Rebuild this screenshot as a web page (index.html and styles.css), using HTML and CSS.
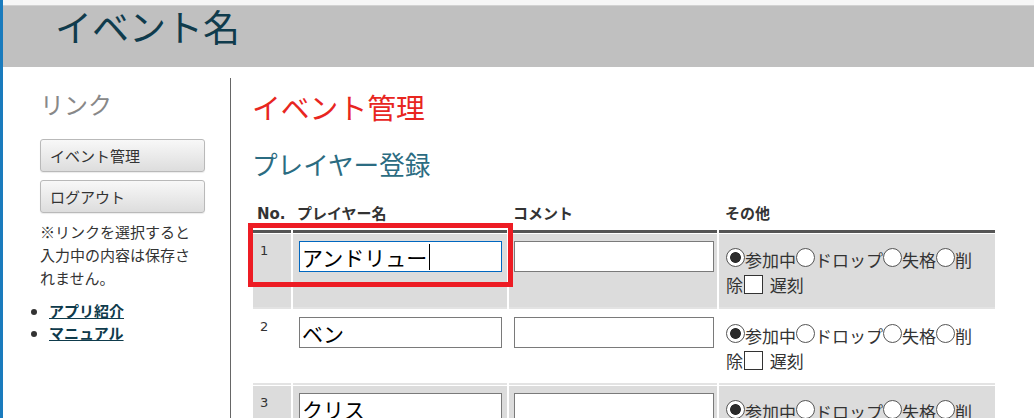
FILE: index.html
```html
<!DOCTYPE html>
<html lang="ja">
<head>
<meta charset="utf-8">
<title>イベント管理</title>
<link rel="stylesheet" href="styles.css">
</head>
<body>
<div class="frame">
  <div class="topstrip"></div>
  <header class="site-header"><h1 class="site-title">イベント名</h1></header>
  <div class="layout">
    <aside class="sidebar">
      <h2 class="side-title">リンク</h2>
      <a class="side-btn" href="#">イベント管理</a>
      <a class="side-btn" href="#">ログアウト</a>
      <p class="side-note">※リンクを選択すると入力中の内容は保存されません。</p>
      <ul class="side-links">
        <li><a href="#">アプリ紹介</a></li>
        <li><a href="#">マニュアル</a></li>
      </ul>
    </aside>
    <main class="content">
      <h1 class="page-title">イベント管理</h1>
      <h2 class="section-title">プレイヤー登録</h2>
      <table class="players">
        <thead>
          <tr><th class="c-no">No.</th><th class="c-name">プレイヤー名</th><th class="c-comment">コメント</th><th class="c-other">その他</th></tr>
        </thead>
        <tbody>
          <tr class="odd">
            <td class="num">1</td>
            <td class="name"><span class="field"><input class="txt txt-name is-focus" type="text" value="アンドリュー"><span class="caret"></span></span></td>
            <td class="comment"><input class="txt txt-comment" type="text" value=""></td>
            <td class="other"><label class="opt"><input class="rd" type="radio" name="s1" checked>参加中</label><label class="opt"><input class="rd" type="radio" name="s1">ドロップ</label><label class="opt"><input class="rd" type="radio" name="s1">失格</label><label class="opt"><input class="rd" type="radio" name="s1">削除</label><label class="opt"><input class="cb" type="checkbox"> 遅刻</label></td>
          </tr>
          <tr>
            <td class="num">2</td>
            <td class="name"><span class="field"><input class="txt txt-name" type="text" value="ベン"></span></td>
            <td class="comment"><input class="txt txt-comment" type="text" value=""></td>
            <td class="other"><label class="opt"><input class="rd" type="radio" name="s2" checked>参加中</label><label class="opt"><input class="rd" type="radio" name="s2">ドロップ</label><label class="opt"><input class="rd" type="radio" name="s2">失格</label><label class="opt"><input class="rd" type="radio" name="s2">削除</label><label class="opt"><input class="cb" type="checkbox"> 遅刻</label></td>
          </tr>
          <tr class="odd">
            <td class="num">3</td>
            <td class="name"><span class="field"><input class="txt txt-name" type="text" value="クリス"></span></td>
            <td class="comment"><input class="txt txt-comment" type="text" value=""></td>
            <td class="other"><label class="opt"><input class="rd" type="radio" name="s3" checked>参加中</label><label class="opt"><input class="rd" type="radio" name="s3">ドロップ</label><label class="opt"><input class="rd" type="radio" name="s3">失格</label><label class="opt"><input class="rd" type="radio" name="s3">削除</label><label class="opt"><input class="cb" type="checkbox"> 遅刻</label></td>
          </tr>
        </tbody>
      </table>
    </main>
  </div>
</div>
<div class="annotation"></div>
</body>
</html>
```

FILE: styles.css
```css
* { box-sizing: border-box; }
html, body { margin: 0; padding: 0; overflow: hidden; background: #fff; }
body {
  font-family: "Noto Sans CJK JP", "Noto Sans", sans-serif;
  color: #333;
  font-size: 15px;
  position: relative;
}
.frame { border-left: 3px solid #1a7bbd; min-height: 418px; }
.topstrip { height: 6px; background: #f6f6f6; border-bottom: 1px solid #d2d2d2; }
.site-header { height: 61px; background: #c0c0c0; padding-left: 52px; }
.site-title {
  margin: 0;
  font-size: 37px;
  font-weight: normal;
  line-height: 40px;
  color: #0f3b4c;
}
.layout { display: flex; }
.sidebar {
  width: 228px;
  flex: none;
  margin-top: 11px;
  padding: 10px 0 0 37px;
  border-right: 1px solid #666;
}
.side-title {
  margin: 0 0 19px;
  font-size: 24px;
  line-height: 32px;
  font-weight: normal;
  color: #888;
}
.side-btn {
  display: block;
  width: 165px;
  height: 33px;
  line-height: 31px;
  padding-left: 9px;
  margin-bottom: 8px;
  border: 1px solid #b9b9b9;
  border-radius: 3px;
  background: linear-gradient(#f8f8f8, #dddddd);
  box-shadow: 0 1px 1px rgba(0,0,0,0.08);
  color: #333;
  text-decoration: none;
  font-size: 15px;
}
.side-btn + .side-btn { margin-bottom: 0; }
.side-note {
  margin: 7px 0 0;
  width: 160px;
  line-height: 23px;
  font-size: 15px;
  color: #333;
}
.side-links {
  margin: 11px 0 0;
  padding-left: 9px;
  line-height: 22px;
  color: #333;
}
.side-links a { color: #0f3b4c; font-weight: bold; text-decoration: underline; }

.content { flex: 1; padding: 20px 0 0 21px; }
.page-title {
  margin: 0 0 19px;
  font-size: 28.8px;
  line-height: 40px;
  font-weight: normal;
  color: #e8261f;
}
.section-title {
  margin: 0 0 21px;
  font-size: 25.6px;
  line-height: 36px;
  font-weight: normal;
  color: #2b6c82;
}
.players {
  border-collapse: separate;
  border-spacing: 2px 1px;
  margin-left: -1px;
  table-layout: fixed;
  width: 746px;
}
.players th {
  text-align: left;
  font-family: "DejaVu Sans", "Noto Sans CJK JP", sans-serif;
  font-size: 15px;
  font-weight: bold;
  line-height: 20px;
  padding: 0 4px 6px;
  border-bottom: 3px solid #555;
  vertical-align: bottom;
  color: #333;
}
.c-no { width: 38px; }
.c-name { width: 214px; }
.c-comment { width: 208px; }
.c-other { width: 276px; padding-left: 6px !important; }
.players td {
  vertical-align: top;
  padding: 7px 5px 10px 6px;
  border-bottom: 2px solid #e3e3e3;
}
.players tr.odd td { background: #dcdcdc; }
.players td.num {
  font-family: "DejaVu Sans", sans-serif;
  font-size: 13px;
  line-height: 20px;
  padding-left: 7px;
  color: #333;
}
.players td.comment { padding-left: 5px; }
.field { display: block; position: relative; width: 203px; }
.txt {
  display: block;
  height: 31px;
  border: 1px solid #7a7a7a;
  border-radius: 0;
  padding: 0 2px;
  margin: 0;
  font-family: "Noto Sans CJK JP", sans-serif;
  font-size: 21px;
  color: #000;
  background: #fff;
  outline: none;
}
.txt-name { width: 203px; }
.txt-comment { width: 200px; }
.txt.is-focus { border-color: #0067c0; }
.caret {
  position: absolute;
  left: 130px;
  top: 3px;
  width: 1px;
  height: 26px;
  background: #000;
}
.players td.other {
  padding: 13px 10px 10px 7px;
  font-size: 17px;
  line-height: 25px;
  color: #333;
}
.rd {
  -webkit-appearance: none;
  appearance: none;
  width: 19px;
  height: 19px;
  margin: 0;
  border: 1px solid #555;
  border-radius: 50%;
  background: #fff;
  vertical-align: baseline;
}
.rd:checked {
  background: radial-gradient(circle at center, #2b2b2b 0, #2b2b2b 5px, #fff 5.8px);
}
.cb {
  -webkit-appearance: none;
  appearance: none;
  width: 19px;
  height: 19px;
  margin: 0 3px 0 1px;
  border: 1px solid #333;
  border-radius: 0;
  background: #fff;
  vertical-align: -2px;
}
.annotation {
  position: absolute;
  left: 248px;
  top: 223px;
  width: 265px;
  height: 64px;
  border: 5px solid #ed1c24;
}
```
